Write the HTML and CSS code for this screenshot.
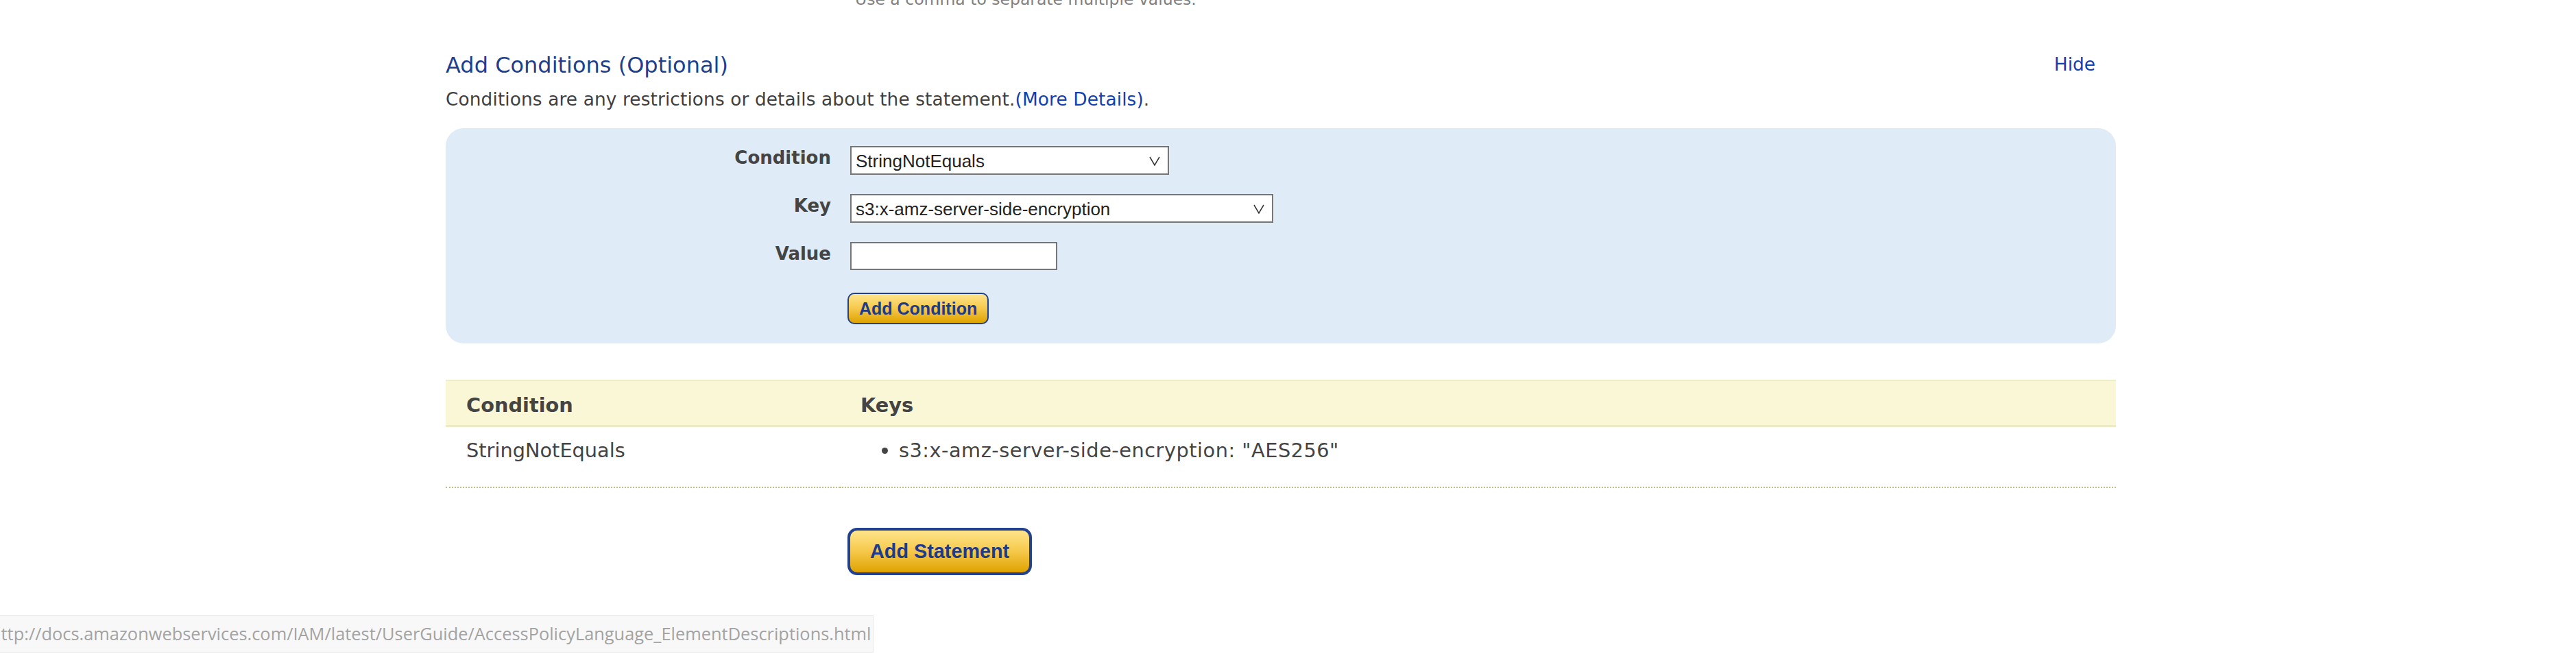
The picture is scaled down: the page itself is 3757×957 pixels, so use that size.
FILE: index.html
```html
<!DOCTYPE html>
<html lang="en">
<head>
<meta charset="utf-8">
<title>Add Conditions</title>
<link rel="stylesheet" href="styles.css">
</head>
<body>
<div class="page">
  <p class="hint">Use a comma to separate multiple values.</p>
  <div class="section-head">
    <h2 class="section-title">Add Conditions (Optional)</h2>
    <a class="hide-link" href="#">Hide</a>
  </div>
  <p class="section-desc">Conditions are any restrictions or details about the statement.<a class="link" href="#">(More Details)</a>.</p>

  <div class="cond-box">
    <div class="form-grid">
      <label class="form-label">Condition</label>
      <div class="select-wrap select-cond">
        <select class="select"><option>StringNotEquals</option></select>
        <svg class="chevron" viewBox="0 0 16 14" width="16" height="14"><path d="M1 1 L8 13 L15 1" fill="none" stroke="#333" stroke-width="1.5"/></svg>
      </div>
      <label class="form-label">Key</label>
      <div class="select-wrap select-key">
        <select class="select"><option>s3:x-amz-server-side-encryption</option></select>
        <svg class="chevron" viewBox="0 0 16 14" width="16" height="14"><path d="M1 1 L8 13 L15 1" fill="none" stroke="#333" stroke-width="1.5"/></svg>
      </div>
      <label class="form-label">Value</label>
      <div class="input-cell"><input class="text-input" type="text"></div>
      <div class="grid-spacer"></div>
      <div class="btn-row"><button class="btn btn-small" type="button">Add Condition</button></div>
    </div>
  </div>

  <table class="cond-table">
    <colgroup><col class="col-cond"><col class="col-keys"></colgroup>
    <thead>
      <tr><th>Condition</th><th>Keys</th></tr>
    </thead>
    <tbody>
      <tr>
        <td>StringNotEquals</td>
        <td><ul class="keys-list"><li>s3:x-amz-server-side-encryption: "AES256"</li></ul></td>
      </tr>
    </tbody>
  </table>

  <div class="actions"><button class="btn btn-large" type="button">Add Statement</button></div>
</div>

<div class="status-bubble"><span class="status-text">http://docs.amazonwebservices.com/IAM/latest/UserGuide/AccessPolicyLanguage_ElementDescriptions.html</span></div>
</body>
</html>
```

FILE: styles.css
```css
* { box-sizing: border-box; }

html, body { overflow: hidden; }

body {
  margin: 0;
  font-family: "DejaVu Sans", Verdana, sans-serif;
  color: #444;
  background: #fff;
}

.page {
  width: 2436px;
  margin-left: 650px;
}

.hint {
  margin: -15px 0 0 597px;
  font-size: 23.5px;
  line-height: 28px;
  color: #808080;
}

.section-head {
  display: flex;
  justify-content: space-between;
  align-items: flex-start;
  margin-top: 63px;
  padding-right: 30px;
}

.section-title {
  margin: 0;
  font-size: 32px;
  line-height: 38px;
  font-weight: normal;
  color: #1e3f8e;
}

.hide-link {
  font-size: 26.4px;
  line-height: 36px;
  color: #1240b0;
  text-decoration: none;
}

.section-desc {
  margin: 15px 0 0;
  font-size: 26.4px;
  line-height: 32px;
  letter-spacing: 0.1px;
  color: #3f3f3f;
}

.link {
  color: #1240b0;
  text-decoration: none;
}

.cond-box {
  margin-top: 26px;
  background: #dfecf7;
  border-radius: 26px;
  padding: 26px 0 28px;
}

.form-grid {
  display: grid;
  grid-template-columns: 562px 1fr;
  column-gap: 28px;
  row-gap: 28px;
  align-items: start;
}

.form-label {
  font-weight: bold;
  font-size: 26px;
  line-height: 32px;
  padding-top: 1px;
  text-align: right;
  color: #444;
}

.select-wrap {
  position: relative;
  justify-self: start;
  height: 42px;
}

.select {
  appearance: none;
  -webkit-appearance: none;
  display: block;
  height: 42px;
  margin: 0;
  border: 2px solid #767676;
  border-radius: 0;
  background: #fff;
  font-family: "Liberation Sans", Arial, sans-serif;
  font-size: 26px;
  color: #222;
  padding: 2px 40px 0 6px;
}

.select-cond .select { width: 465px; }
.select-key .select { width: 617px; }

.chevron {
  position: absolute;
  right: 13px;
  top: 15px;
}

.input-cell { height: 41px; }

.text-input {
  display: block;
  width: 302px;
  height: 41px;
  margin: 0;
  border: 2px solid #767676;
  background: #fff;
  padding: 0 6px;
  font-family: "Liberation Sans", Arial, sans-serif;
  font-size: 26px;
}

.btn-row {
  margin-top: 5px;
  margin-left: -4px;
}

.btn {
  font-family: "Liberation Sans", Arial, sans-serif;
  font-weight: bold;
  color: #1d3b8a;
  background: linear-gradient(#fde58c, #f6c84a 50%, #dea300);
  cursor: pointer;
  margin: 0;
}

.btn-small {
  height: 46px;
  padding: 0 15px;
  font-size: 25px;
  border: 2px solid #22418f;
  border-radius: 10px;
}

.btn-large {
  height: 69px;
  padding: 0 29px;
  font-size: 28.8px;
  border: 4px solid #22418f;
  border-radius: 14px;
}

.cond-table {
  width: 100%;
  table-layout: fixed;
  border-collapse: separate;
  border-spacing: 0;
  margin-top: 53px;
  font-size: 28.8px;
  line-height: 34px;
  color: #444;
}

.col-cond { width: 575px; }

.cond-table th {
  background: #faf7d7;
  border-top: 2px solid #eeecc9;
  border-bottom: 3px solid #ecebc5;
  text-align: left;
  font-weight: bold;
  padding: 18px 30px 12px;
}

.cond-table td {
  padding: 17px 30px 36px;
  border-bottom: 2px dotted #bfbf80;
  vertical-align: top;
}

.keys-list {
  margin: 0;
  padding-left: 56px;
  letter-spacing: 0.5px;
}

.actions {
  margin-top: 58px;
  padding-left: 586px;
}

.status-bubble {
  position: fixed;
  left: 0;
  bottom: 5px;
  width: 1274px;
  height: 55px;
  background: #f8f8f8;
  border: 1px solid #e8e8e8;
  border-left: none;
  overflow: hidden;
  white-space: nowrap;
}

.status-text {
  display: block;
  margin-left: -14px;
  font-family: "Open Sans", "Noto Sans", sans-serif;
  font-size: 25.4px;
  line-height: 53px;
  color: #a3a3a3;
}
```
